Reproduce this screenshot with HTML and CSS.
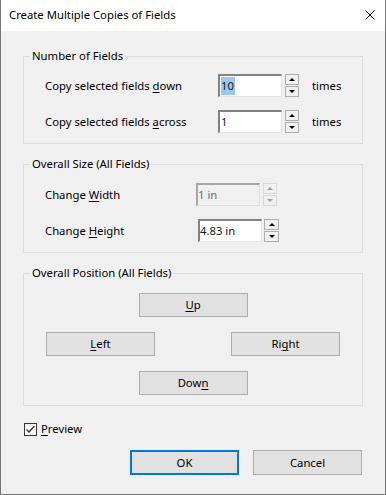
FILE: index.html
```html
<!DOCTYPE html>
<html lang="en">
<head>
    <meta charset="UTF-8">
    <title>Create Multiple Copies of Fields</title>
    <link rel="stylesheet" href="styles.css">
</head>
<body>
    <div class="window">
        <div class="titlebar">
            <span class="title">Create Multiple Copies of Fields</span>
            <svg class="close" width="10" height="10" viewBox="0 0 10 10">
                <path d="M0.5 0.5 L9.5 9.5 M9.5 0.5 L0.5 9.5" stroke="#000" stroke-width="1" fill="none"/>
            </svg>
        </div>

        <div class="content">
            <!-- NUMBER OF FIELDS -->
            <fieldset class="group group-count">
                <legend>Number of Fields</legend>
                <div class="row">
                    <label class="label label-count">Copy selected fields <u>d</u>own</label>
                    <div class="field"><span class="selected">10</span></div>
                    <div class="spin">
                        <span class="spin-btn"><i class="arrow up"></i></span>
                        <span class="spin-btn"><i class="arrow down"></i></span>
                    </div>
                    <span class="unit">times</span>
                </div>
                <div class="row">
                    <label class="label label-count">Copy selected fields <u>a</u>cross</label>
                    <div class="field">1</div>
                    <div class="spin">
                        <span class="spin-btn"><i class="arrow up"></i></span>
                        <span class="spin-btn"><i class="arrow down"></i></span>
                    </div>
                    <span class="unit">times</span>
                </div>
            </fieldset>

            <!-- OVERALL SIZE -->
            <fieldset class="group group-size">
                <legend>Overall Size (All Fields)</legend>
                <div class="row">
                    <label class="label label-size">Change <u>W</u>idth</label>
                    <div class="field disabled">1 in</div>
                    <div class="spin disabled">
                        <span class="spin-btn"><i class="arrow up"></i></span>
                        <span class="spin-btn"><i class="arrow down"></i></span>
                    </div>
                </div>
                <div class="row">
                    <label class="label label-size label-height">Change <u>H</u>eight</label>
                    <div class="field">4.83 in</div>
                    <div class="spin">
                        <span class="spin-btn"><i class="arrow up"></i></span>
                        <span class="spin-btn"><i class="arrow down"></i></span>
                    </div>
                </div>
            </fieldset>

            <!-- OVERALL POSITION -->
            <fieldset class="group group-position">
                <legend>Overall Position (All Fields)</legend>
                <div class="btn-row center">
                    <button class="btn"><u>U</u>p</button>
                </div>
                <div class="btn-row spread">
                    <button class="btn"><u>L</u>eft</button>
                    <button class="btn">Ri<u>g</u>ht</button>
                </div>
                <div class="btn-row center">
                    <button class="btn">Dow<u>n</u></button>
                </div>
            </fieldset>

            <div class="check-row">
                <span class="checkbox">
                    <svg width="11" height="11" viewBox="0 0 11 11">
                        <path d="M1.5 5.5 L4 8 L9.5 2" stroke="#333" stroke-width="1.3" fill="none"/>
                    </svg>
                </span>
                <span><u>P</u>review</span>
            </div>

            <div class="actions">
                <button class="btn btn-default">OK</button>
                <button class="btn">Cancel</button>
            </div>
        </div>
    </div>
</body>
</html>
```

FILE: styles.css
```css
* {
    box-sizing: border-box;
}

html, body {
    margin: 0;
    padding: 0;
    font-family: 'Noto Sans', 'Open Sans', sans-serif;
    font-size: 11.3px;
    color: #000;
    background: #f0f0f0;
}

u {
    text-decoration: underline;
    text-underline-offset: 2px;
}

/* WINDOW */
.window {
    width: 386px;
    height: 495px;
    border: 1px solid #777;
    border-top: none;
    background: #f0f0f0;
    display: flex;
    flex-direction: column;
}

.titlebar {
    height: 31px;
    background: #fff;
    display: flex;
    align-items: center;
    justify-content: space-between;
    padding: 0 9px 2px 8px;
}

.title {
    line-height: 16px;
}

.close {
    margin-right: 1px;
}

.content {
    padding: 17px 22px 0 22px;
    display: flex;
    flex-direction: column;
}

/* GROUP BOXES */
.group {
    margin: 0 0 12px 0;
    border: 1px solid #dcdcdc;
    padding: 10px 0 10px 6px;
    min-width: 0;
}

.group legend {
    padding: 0 2px;
    line-height: 16px;
}

.group-size {
    padding-top: 11px;
}

.group-position {
    padding: 12px 6px 10px 6px;
}

.row {
    display: flex;
    align-items: center;
    height: 23px;
    padding-left: 15px;
}

.row + .row {
    margin-top: 13px;
}

.label {
    line-height: 16px;
}

.label-count {
    width: 173px;
}

.label-size {
    width: 151px;
}

.label-height {
    width: 153px;
}

/* INPUTS */
.field {
    width: 64px;
    height: 23px;
    background: #fff;
    border-style: solid;
    border-width: 2px 1px 1px 2px;
    border-color: #828282 #e3e3e3 #e3e3e3 #828282;
    padding: 1px 0 0 1px;
    line-height: 17px;
    color: #1a1a1a;
}

.group-size .field {
    padding-left: 0;
}

.field.disabled {
    background: #f0f0f0;
    color: #6d6d6d;
    border-color: #a5a5a5 #dedede #dedede #a5a5a5;
}

.selected {
    background: #99c9ef;
    display: inline-block;
    line-height: 18px;
    padding-right: 1px;
}

.spin {
    width: 14px;
    height: 23px;
    margin-left: 3px;
    display: flex;
    flex-direction: column;
    gap: 1px;
}

.group-size .row:last-child .spin {
    margin-left: 2px;
    width: 15px;
}

.spin-btn {
    flex: 1;
    border: 1px solid #adadad;
    background: #f0f0f0;
    display: flex;
    align-items: center;
    justify-content: center;
}

.arrow {
    width: 0;
    height: 0;
    border-left: 3px solid transparent;
    border-right: 3px solid transparent;
}

.arrow.up {
    border-bottom: 3px solid #000;
}

.arrow.down {
    border-top: 3px solid #000;
}

.spin.disabled .spin-btn {
    border-color: #d9d9d9;
}

.spin.disabled .arrow.up {
    border-bottom-color: #a0a0a0;
}

.spin.disabled .arrow.down {
    border-top-color: #a0a0a0;
}

.unit {
    margin-left: 13px;
    line-height: 16px;
}

/* BUTTONS */
.btn {
    width: 109px;
    height: 24px;
    background: #e1e1e1;
    border: 1px solid #adadad;
    border-radius: 0;
    font-family: inherit;
    font-size: inherit;
    color: #000;
    padding: 0;
    line-height: 16px;
}

.btn-row {
    display: flex;
}

.btn-row + .btn-row {
    margin-top: 15px;
}

.btn-row.center {
    justify-content: center;
}

.btn-row.spread {
    justify-content: space-between;
    padding: 0 16px;
}

/* BOTTOM */
.check-row {
    display: flex;
    align-items: center;
    gap: 4px;
    height: 16px;
    margin-top: 3px;
    padding-left: 1px;
    line-height: 16px;
}

.checkbox {
    width: 13px;
    height: 13px;
    border: 1px solid #333;
    background: #fff;
    display: flex;
    align-items: center;
    justify-content: center;
}

.actions {
    display: flex;
    justify-content: flex-end;
    gap: 14px;
    margin-top: 13px;
    padding-right: 1px;
}

.actions .btn {
    height: 25px;
}

.btn-default {
    border: 2px solid #0078d7;
}
```
